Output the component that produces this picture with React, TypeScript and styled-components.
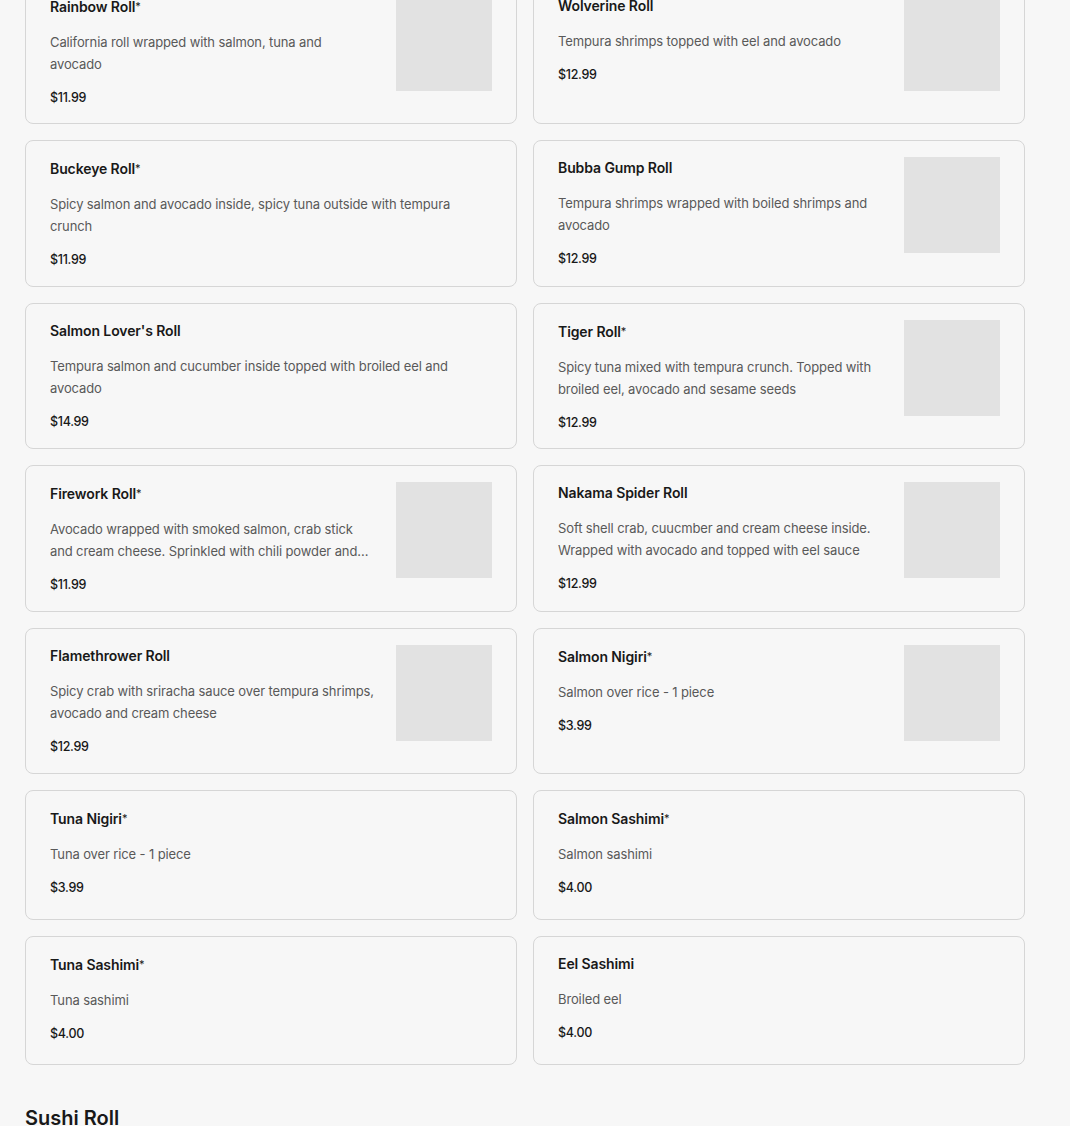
import React from 'react';
import styled, { createGlobalStyle } from 'styled-components';

interface Item {
  name: string
  star?: boolean
  desc: string
  price: string
  image?: boolean
}

const items: Item[] = [
  { name: 'Rainbow Roll', star: true, desc: 'California roll wrapped with salmon, tuna and avocado', price: '$11.99', image: true },
  { name: 'Wolverine Roll', desc: 'Tempura shrimps topped with eel and avocado', price: '$12.99', image: true },
  { name: 'Buckeye Roll', star: true, desc: 'Spicy salmon and avocado inside, spicy tuna outside with tempura crunch', price: '$11.99' },
  { name: 'Bubba Gump Roll', desc: 'Tempura shrimps wrapped with boiled shrimps and avocado', price: '$12.99', image: true },
  { name: "Salmon Lover's Roll", desc: 'Tempura salmon and cucumber inside topped with broiled eel and avocado', price: '$14.99' },
  { name: 'Tiger Roll', star: true, desc: 'Spicy tuna mixed with tempura crunch. Topped with broiled eel, avocado and sesame seeds', price: '$12.99', image: true },
  { name: 'Firework Roll', star: true, desc: 'Avocado wrapped with smoked salmon, crab stick and cream cheese. Sprinkled with chili powder and sesame seeds', price: '$11.99', image: true },
  { name: 'Nakama Spider Roll', desc: 'Soft shell crab, cuucmber and cream cheese inside. Wrapped with avocado and topped with eel sauce', price: '$12.99', image: true },
  { name: 'Flamethrower Roll', desc: 'Spicy crab with sriracha sauce over tempura shrimps, avocado and cream cheese', price: '$12.99', image: true },
  { name: 'Salmon Nigiri', star: true, desc: 'Salmon over rice - 1 piece', price: '$3.99', image: true },
  { name: 'Tuna Nigiri', star: true, desc: 'Tuna over rice - 1 piece', price: '$3.99' },
  { name: 'Salmon Sashimi', star: true, desc: 'Salmon sashimi', price: '$4.00' },
  { name: 'Tuna Sashimi', star: true, desc: 'Tuna sashimi', price: '$4.00' },
  { name: 'Eel Sashimi', desc: 'Broiled eel', price: '$4.00' },
];

const GlobalStyle = createGlobalStyle`
  body {
    margin: 0;
    background: #f7f7f7;
    font-family: Inter, "Liberation Sans", sans-serif;
    color: #191919;
    overflow: hidden;
  }
`;

const Page = styled.div`
  padding: 0 45px 0 25px;
`;

// list is scrolled: the first row is partly above the top edge
const Grid = styled.div`
  display: grid;
  grid-template-columns: 1fr 1fr;
  gap: 16px;
  margin-top: -22.5px;
`;

const Card = styled.div`
  display: flex;
  gap: 20px;
  box-sizing: border-box;
  min-height: 129.5px;
  padding: 16px 24px 15px;
  border: 1px solid #d6d6d6;
  border-radius: 8px;
  background: #f7f7f7;
`;

const Info = styled.div`
  flex: 1;
  min-width: 0;
`;

const Name = styled.div`
  font-size: 14px;
  line-height: 20px;
  font-weight: 600;
  color: #191919;
  letter-spacing: -0.1px;
  margin: 1px 0 14px;
`;

const Star = styled.span`
  font-size: 11px;
  font-weight: 400;
  vertical-align: 2px;
`;

const Desc = styled.div`
  font-size: 13px;
  line-height: 22px;
  color: #595959;
  letter-spacing: -0.12px;
  display: -webkit-box;
  -webkit-line-clamp: 2;
  -webkit-box-orient: vertical;
  overflow: hidden;
`;

const Price = styled.div`
  margin-top: 13px;
  font-size: 12.5px;
  line-height: 20px;
  font-weight: 500;
  color: #191919;
  letter-spacing: -0.3px;
`;

const Thumb = styled.div`
  flex: none;
  width: 96px;
  height: 96px;
  margin-bottom: 17.5px;
  background: #e2e2e2;
`;

const Heading = styled.h2`
  margin: 39px 0 0;
  font-size: 20px;
  line-height: 28px;
  font-weight: 600;
  color: #191919;
`;

const App = () => {
  return (
    <Page>
      <GlobalStyle />
      <Grid>
        {items.map((item, i) => (
          <Card key={i}>
            <Info>
              <Name>{item.name}{item.star && <Star>*</Star>}</Name>
              <Desc>{item.desc}</Desc>
              <Price>{item.price}</Price>
            </Info>
            {item.image && <Thumb />}
          </Card>
        ))}
      </Grid>
      <Heading>Sushi Roll</Heading>
    </Page>
  );
};

export default App;
